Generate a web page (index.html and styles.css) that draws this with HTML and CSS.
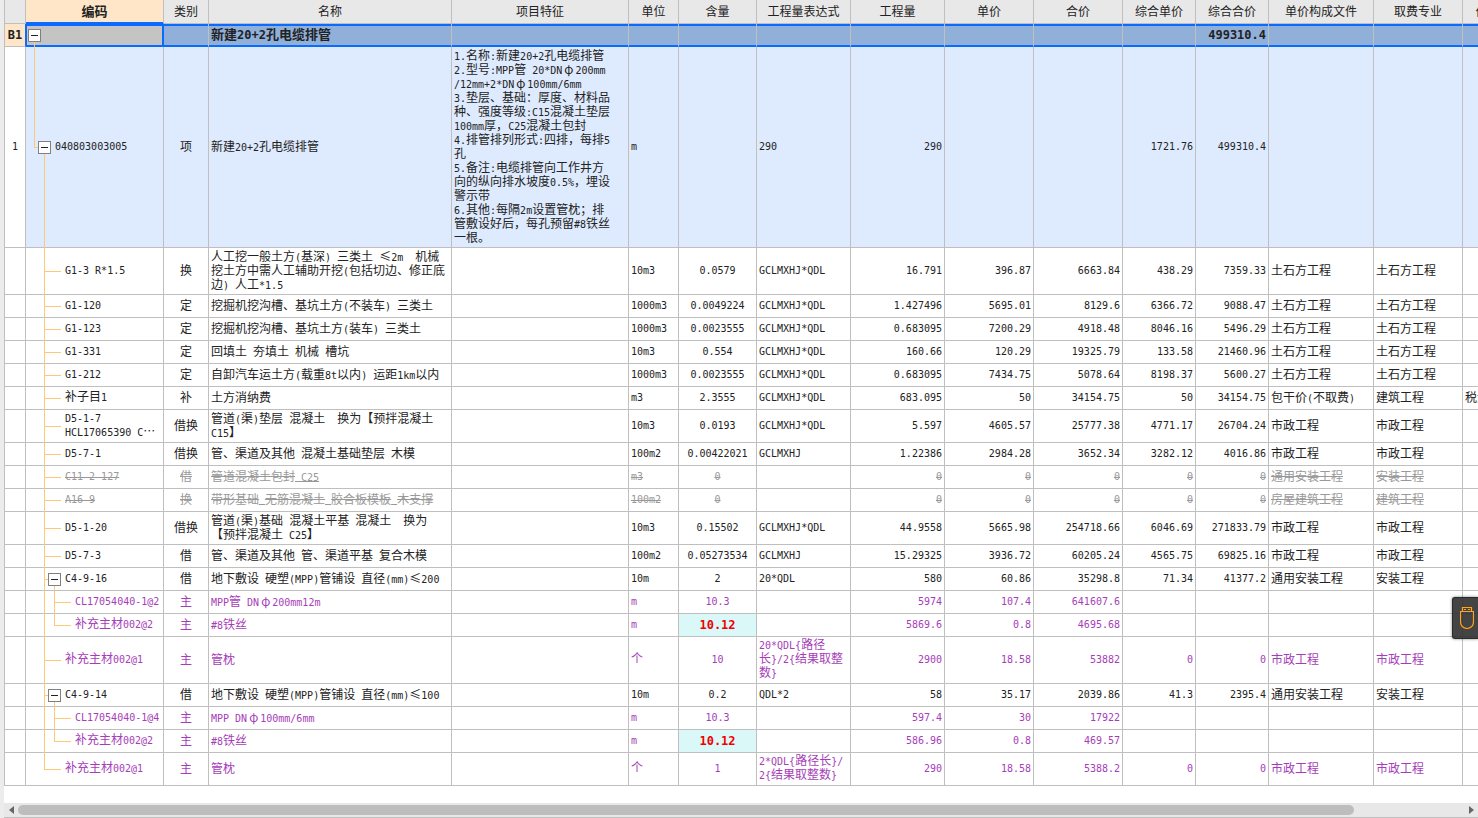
FILE: index.html
```html
<!DOCTYPE html>
<html lang="zh-CN">
<head>
<meta charset="utf-8">
<title>分部分项工程量清单</title>
<link rel="stylesheet" href="styles.css">
</head>
<body>
<main class="pane">
<div class="sheet">
<table class="grid">
<colgroup><col class="c-no"><col class="c-code"><col class="c-type"><col class="c-name"><col class="c-feat"><col class="c-unit"><col class="c-amt"><col class="c-expr"><col class="c-qty"><col class="c-price"><col class="c-price"><col class="c-comp"><col class="c-comp"><col class="c-file"><col class="c-major"><col class="c-last"></colgroup>
<thead>
<tr><th></th><th class="active">编码</th><th>类别</th><th>名称</th><th>项目特征</th><th>单位</th><th>含量</th><th>工程量表达式</th><th>工程量</th><th>单价</th><th>合价</th><th>综合单价</th><th>综合合价</th><th>单价构成文件</th><th>取费专业</th><th>价格</th></tr>
</thead>
<tbody>
<tr class="section"><td>B1</td><td class="tree root"><button class="toggle" type="button" aria-label="折叠"></button></td><td></td><td>新建<span class="w">20+2</span>孔电缆排管</td><td></td><td></td><td></td><td></td><td></td><td></td><td></td><td></td><td>499310.4</td><td></td><td></td><td></td></tr>
<tr class="item"><td>1</td><td class="tree list"><button class="toggle" type="button" aria-label="折叠"></button>040803003005</td><td>项</td><td>新建<span class="w">20+2</span>孔电缆排管</td><td><span class="w">1.</span>名称<span class="w">:</span>新建<span class="w">20+2</span>孔电缆排管<br><span class="w">2.</span>型号<span class="w">:MPP</span>管<span class="w"> 20*DN</span><span class="phi">φ</span><span class="w">200mm</span><br><span class="w">/12mm+2*DN</span><span class="phi">φ</span><span class="w">100mm/6mm</span><br><span class="w">3.</span>垫层、基础：厚度、材料品<br>种、强度等级<span class="w">:C15</span>混凝土垫层<br><span class="w">100mm</span>厚，<span class="w">C25</span>混凝土包封<br><span class="w">4.</span>排管排列形式<span class="w">:</span>四排，每排<span class="w">5</span><br>孔<br><span class="w">5.</span>备注<span class="w">:</span>电缆排管向工作井方<br>向的纵向排水坡度<span class="w">0.5%</span>，埋设<br>警示带<br><span class="w">6.</span>其他<span class="w">:</span>每隔<span class="w">2m</span>设置管枕；排<br>管敷设好后，每孔预留<span class="w">#8</span>铁丝<br>一根。</td><td>m</td><td></td><td>290</td><td>290</td><td></td><td></td><td>1721.76</td><td>499310.4</td><td></td><td></td><td></td></tr>
<tr><td></td><td class="tree leaf">G1-3 R*1.5</td><td>换</td><td>人工挖一般土方<span class="w">(</span>基深<span class="w">) </span>三类土<span class="w"> </span>≤<span class="w">2m  </span>机械<br>挖土方中需人工辅助开挖<span class="w">(</span>包括切边、修正底<br>边<span class="w">) </span>人工<span class="w">*1.5</span></td><td></td><td>10m3</td><td>0.0579</td><td>GCLMXHJ*QDL</td><td>16.791</td><td>396.87</td><td>6663.84</td><td>438.29</td><td>7359.33</td><td>土石方工程</td><td>土石方工程</td><td></td></tr>
<tr><td></td><td class="tree leaf">G1-120</td><td>定</td><td>挖掘机挖沟槽、基坑土方<span class="w">(</span>不装车<span class="w">) </span>三类土</td><td></td><td>1000m3</td><td>0.0049224</td><td>GCLMXHJ*QDL</td><td>1.427496</td><td>5695.01</td><td>8129.6</td><td>6366.72</td><td>9088.47</td><td>土石方工程</td><td>土石方工程</td><td></td></tr>
<tr><td></td><td class="tree leaf">G1-123</td><td>定</td><td>挖掘机挖沟槽、基坑土方<span class="w">(</span>装车<span class="w">) </span>三类土</td><td></td><td>1000m3</td><td>0.0023555</td><td>GCLMXHJ*QDL</td><td>0.683095</td><td>7200.29</td><td>4918.48</td><td>8046.16</td><td>5496.29</td><td>土石方工程</td><td>土石方工程</td><td></td></tr>
<tr><td></td><td class="tree leaf">G1-331</td><td>定</td><td>回填土<span class="w"> </span>夯填土<span class="w"> </span>机械<span class="w"> </span>槽坑</td><td></td><td>10m3</td><td>0.554</td><td>GCLMXHJ*QDL</td><td>160.66</td><td>120.29</td><td>19325.79</td><td>133.58</td><td>21460.96</td><td>土石方工程</td><td>土石方工程</td><td></td></tr>
<tr><td></td><td class="tree leaf">G1-212</td><td>定</td><td>自卸汽车运土方<span class="w">(</span>载重<span class="w">8t</span>以内<span class="w">) </span>运距<span class="w">1km</span>以内</td><td></td><td>1000m3</td><td>0.0023555</td><td>GCLMXHJ*QDL</td><td>0.683095</td><td>7434.75</td><td>5078.64</td><td>8198.37</td><td>5600.27</td><td>土石方工程</td><td>土石方工程</td><td></td></tr>
<tr><td></td><td class="tree leaf"><span class="cn">补子目</span>1</td><td>补</td><td>土方消纳费</td><td></td><td>m3</td><td>2.3555</td><td>GCLMXHJ*QDL</td><td>683.095</td><td>50</td><td>34154.75</td><td>50</td><td>34154.75</td><td>包干价<span class="w">(</span>不取费<span class="w">)</span></td><td>建筑工程</td><td>税金</td></tr>
<tr><td></td><td class="tree leaf">D5-1-7<br>HCL17065390 C<span class="cn">…</span></td><td>借换</td><td>管道<span class="w">(</span>渠<span class="w">)</span>垫层<span class="w"> </span>混凝土<span class="w">  </span>换为【预拌混凝土<br><span class="w">C15</span>】</td><td></td><td>10m3</td><td>0.0193</td><td>GCLMXHJ*QDL</td><td>5.597</td><td>4605.57</td><td>25777.38</td><td>4771.17</td><td>26704.24</td><td>市政工程</td><td>市政工程</td><td></td></tr>
<tr><td></td><td class="tree leaf">D5-7-1</td><td>借换</td><td>管、渠道及其他<span class="w"> </span>混凝土基础垫层<span class="w"> </span>木模</td><td></td><td>100m2</td><td>0.00422021</td><td>GCLMXHJ</td><td>1.22386</td><td>2984.28</td><td>3652.34</td><td>3282.12</td><td>4016.86</td><td>市政工程</td><td>市政工程</td><td></td></tr>
<tr class="void"><td></td><td class="tree leaf">C11-2-127</td><td>借</td><td>管道混凝土包封<span class="w"> C25</span></td><td></td><td>m3</td><td>0</td><td></td><td>0</td><td>0</td><td>0</td><td>0</td><td>0</td><td>通用安装工程</td><td>安装工程</td><td></td></tr>
<tr class="void"><td></td><td class="tree leaf">A16-9</td><td>换</td><td>带形基础<span class="w"> </span>无筋混凝土<span class="w"> </span>胶合板模板<span class="w"> </span>木支撑</td><td></td><td>100m2</td><td>0</td><td></td><td>0</td><td>0</td><td>0</td><td>0</td><td>0</td><td>房屋建筑工程</td><td>建筑工程</td><td></td></tr>
<tr><td></td><td class="tree leaf">D5-1-20</td><td>借换</td><td>管道<span class="w">(</span>渠<span class="w">)</span>基础<span class="w"> </span>混凝土平基<span class="w"> </span>混凝土<span class="w">  </span>换为<br>【预拌混凝土<span class="w"> C25</span>】</td><td></td><td>10m3</td><td>0.15502</td><td>GCLMXHJ*QDL</td><td>44.9558</td><td>5665.98</td><td>254718.66</td><td>6046.69</td><td>271833.79</td><td>市政工程</td><td>市政工程</td><td></td></tr>
<tr><td></td><td class="tree leaf">D5-7-3</td><td>借</td><td>管、渠道及其他<span class="w"> </span>管、渠道平基<span class="w"> </span>复合木模</td><td></td><td>100m2</td><td>0.05273534</td><td>GCLMXHJ</td><td>15.29325</td><td>3936.72</td><td>60205.24</td><td>4565.75</td><td>69825.16</td><td>市政工程</td><td>市政工程</td><td></td></tr>
<tr><td></td><td class="tree branch"><button class="toggle" type="button" aria-label="折叠"></button>C4-9-16</td><td>借</td><td>地下敷设<span class="w"> </span>硬塑<span class="w">(MPP)</span>管铺设<span class="w"> </span>直径<span class="w">(mm)</span>≤<span class="w">200</span></td><td></td><td>10m</td><td>2</td><td>20*QDL</td><td>580</td><td>60.86</td><td>35298.8</td><td>71.34</td><td>41377.2</td><td>通用安装工程</td><td>安装工程</td><td></td></tr>
<tr class="material"><td></td><td class="tree sub">CL17054040-1@2</td><td>主</td><td><span class="w">MPP</span>管<span class="w"> DN</span><span class="phi">φ</span><span class="w">200mm12m</span></td><td></td><td>m</td><td>10.3</td><td></td><td>5974</td><td>107.4</td><td>641607.6</td><td></td><td></td><td></td><td></td><td></td></tr>
<tr class="material"><td></td><td class="tree sub sub-end"><span class="cn">补充主材</span>002@2</td><td>主</td><td><span class="w">#8</span>铁丝</td><td></td><td>m</td><td class="changed">10.12</td><td></td><td>5869.6</td><td>0.8</td><td>4695.68</td><td></td><td></td><td></td><td></td><td></td></tr>
<tr class="material"><td></td><td class="tree leaf"><span class="cn">补充主材</span>002@1</td><td>主</td><td>管枕</td><td></td><td><span class="cn">个</span></td><td>10</td><td>20*QDL{<span class="cn">路径</span><br><span class="cn">长</span>}/2{<span class="cn">结果取整</span><br><span class="cn">数</span>}</td><td>2900</td><td>18.58</td><td>53882</td><td>0</td><td>0</td><td>市政工程</td><td>市政工程</td><td></td></tr>
<tr><td></td><td class="tree branch"><button class="toggle" type="button" aria-label="折叠"></button>C4-9-14</td><td>借</td><td>地下敷设<span class="w"> </span>硬塑<span class="w">(MPP)</span>管铺设<span class="w"> </span>直径<span class="w">(mm)</span>≤<span class="w">100</span></td><td></td><td>10m</td><td>0.2</td><td>QDL*2</td><td>58</td><td>35.17</td><td>2039.86</td><td>41.3</td><td>2395.4</td><td>通用安装工程</td><td>安装工程</td><td></td></tr>
<tr class="material"><td></td><td class="tree sub">CL17054040-1@4</td><td>主</td><td><span class="w">MPP DN</span><span class="phi">φ</span><span class="w">100mm/6mm</span></td><td></td><td>m</td><td>10.3</td><td></td><td>597.4</td><td>30</td><td>17922</td><td></td><td></td><td></td><td></td><td></td></tr>
<tr class="material"><td></td><td class="tree sub sub-end"><span class="cn">补充主材</span>002@2</td><td>主</td><td><span class="w">#8</span>铁丝</td><td></td><td>m</td><td class="changed">10.12</td><td></td><td>586.96</td><td>0.8</td><td>469.57</td><td></td><td></td><td></td><td></td><td></td></tr>
<tr class="material"><td></td><td class="tree leaf leaf-end"><span class="cn">补充主材</span>002@1</td><td>主</td><td>管枕</td><td></td><td><span class="cn">个</span></td><td>1</td><td>2*QDL{<span class="cn">路径长</span>}/<br>2{<span class="cn">结果取整数</span>}</td><td>290</td><td>18.58</td><td>5388.2</td><td>0</td><td>0</td><td>市政工程</td><td>市政工程</td><td></td></tr>
</tbody>
</table>
</div>
<div class="scrollbar">
<button class="arrow" type="button" aria-label="向左滚动"><svg width="5" height="8" viewBox="0 0 5 8"><path d="M5 0v8L0 4z"/></svg></button>
<div class="track"><div class="thumb"></div></div>
<button class="arrow" type="button" aria-label="向右滚动"><svg width="5" height="8" viewBox="0 0 5 8"><path d="M0 0v8l5-4z"/></svg></button>
</div>
</main>
<button class="dongle" type="button" aria-label="加密锁">
<svg width="14" height="22" viewBox="0 0 14 22" fill="none" stroke="#ffa41c" stroke-width="1.200"><path d="M2.500 4.500v-4h9v4M.5 4.500h13v10q0 6.500-6.500 7Q.5 21 .5 14.500zM4 2.500h2M8 2.500h2"/></svg>
</button>
</body>
</html>
```
FILE: styles.css
```css
* { box-sizing: border-box; }

body {
  margin: 0;
  height: 100vh;
  overflow: hidden;
  background: #ececec;
  color: #222;
  font-family: "DejaVu Sans Mono", "Noto Sans CJK SC", monospace;
  font-size: 10px;
  line-height: 14px;
}

button {
  margin: 0;
  padding: 0;
  border: 0;
  background: none;
}

.pane {
  display: flex;
  flex-direction: column;
  height: 100%;
  padding-left: 4px;
}

.sheet {
  flex: 1;
  overflow: hidden;
  background: #fff;
}

/* ---- grid ---- */

.grid {
  table-layout: fixed;
  width: 1498px;
  border-left: 1px solid #bfbfbf;
  border-spacing: 0;
}

.c-no { width: 21px; }
.c-code { width: 138px; }
.c-type { width: 45px; }
.c-name { width: 243px; }
.c-feat { width: 177px; }
.c-unit { width: 50px; }
.c-amt { width: 78px; }
.c-expr { width: 94px; }
.c-qty { width: 94px; }
.c-price { width: 89px; }
.c-comp { width: 73px; }
.c-file { width: 105px; }
.c-major { width: 89px; }
.c-last { width: 50px; }

th,
td {
  padding: 2px;
  border-right: 1px solid #bfbfbf;
  border-bottom: 1px solid #bfbfbf;
  white-space: pre;
  overflow: hidden;
}

th {
  height: 24px;
  padding: 1px 2px 3px;
  background: #e8e8e8;
  font: 12px/14px "Noto Sans CJK SC", sans-serif;
}

th.active {
  border-bottom-color: #0a6cff;
  background: #ffe6c8;
  box-shadow: inset 0 -1px #0a6cff;
  font-size: 13px;
  font-weight: bold;
}

td { height: 23px; }

td:nth-child(1),
td:nth-child(3),
td:nth-child(7) { text-align: center; }

td:nth-child(n+9):nth-child(-n+13) { text-align: right; }

td:nth-child(1) { padding: 0; }

td:nth-child(3),
td:nth-child(4),
td:nth-child(5),
td:nth-child(n+14) {
  padding: 1px 2px 3px;
  font-family: "Noto Sans CJK SC", sans-serif;
  font-size: 12px;
}

/* half-width runs inside Chinese text, and the reverse */
.w {
  font-family: "DejaVu Sans Mono", monospace;
  font-size: 10px;
  line-height: 0;
}

.cn {
  font-family: "Noto Sans CJK SC", sans-serif;
  font-size: 12px;
  line-height: 0;
}

/* full-width diameter sign */
.phi {
  padding: 0 2px;
  line-height: 0;
}

/* ---- row kinds ---- */

.section td {
  border-bottom-color: #0a6cff;
  background: #90b0da;
  box-shadow: inset 0 2px #0a6cff, inset 0 -1px #0a6cff;
  font-size: 12px;
  font-weight: bold;
}

.section td:nth-child(4) { font-size: 13px; }
.section .w { font-size: 12px; }

.section td:first-child {
  border-right-color: #0a6cff;
  border-bottom-color: #bfbfbf;
  background: #ffe6c8;
  box-shadow: none;
}

.section td.root {
  border-right-color: #0a6cff;
  background: #c4c4c4;
  box-shadow: inset 0 2px #0a6cff, inset 1px -1px #0a6cff, inset -1px 0 #0a6cff;
}

.item td { background: #deeafe; }
.item td:first-child { background: #fff; }

.void td {
  color: #999;
  text-decoration: line-through;
}

.material td { color: #a63db8; }

.material td.changed {
  background: #daf8f8;
  color: #f00000;
  font-size: 12px;
  font-weight: bold;
}

/* ---- outline in the code column ---- */

.tree {
  position: relative;
  overflow: visible;
}

.tree::before {
  content: "";
  position: absolute;
  inset: 0 0 -1px;
  background-repeat: no-repeat;
  --line: linear-gradient(#ffc878, #ffc878);
}

.root { padding: 2px; }
.list { padding-left: 12px; }
.leaf { padding-left: 39px; }
.branch { padding-left: 22px; }
.sub { padding-left: 49px; }

.root::before {
  background-image: var(--line);
  background-position: 8px 100%;
  background-size: 1px 6px;
}

.list::before {
  background-image: var(--line), var(--line), var(--line);
  background-position: 8px 0, 8px 50%, 18px 100%;
  background-size: 1px 50%, 4px 1px, 1px 50%;
}

.leaf::before {
  background-image: var(--line), var(--line);
  background-position: 18px 0, 18px 50%;
  background-size: 1px 100%, 17px 1px;
}

.leaf-end::before { background-size: 1px 50%, 17px 1px; }

.branch::before {
  background-image: var(--line), var(--line), var(--line);
  background-position: 18px 0, 18px 50%, 28px 100%;
  background-size: 1px 100%, 4px 1px, 1px 50%;
}

.sub::before {
  background-image: var(--line), var(--line), var(--line);
  background-position: 18px 0, 28px 0, 28px 50%;
  background-size: 1px 100%, 1px 100%, 17px 1px;
}

.sub-end::before { background-size: 1px 100%, 1px 50%, 17px 1px; }

.toggle {
  position: relative;
  width: 13px;
  height: 13px;
  margin-right: 4px;
  border: 1px solid #808080;
  background: linear-gradient(#222, #222) center / 7px 1px no-repeat #fff;
  vertical-align: middle;
}

/* ---- horizontal scrollbar ---- */

.scrollbar {
  display: flex;
  align-items: center;
  height: 15px;
  border-bottom: 1px solid #bfbfbf;
  background: #e8e8e8;
}

.arrow {
  display: flex;
  align-items: center;
  justify-content: center;
  width: 14px;
  height: 14px;
  fill: #666;
}

.track { flex: 1; }

.thumb {
  width: 92.400%;
  height: 10px;
  border-radius: 5px;
  background: #bdbdbd;
}

/* ---- dongle tab docked at the window edge ---- */

.dongle {
  position: absolute;
  top: 597px;
  right: 0;
  display: flex;
  align-items: center;
  width: 26px;
  height: 42px;
  padding-left: 7px;
  border: 1px solid #2b2b2b;
  border-right: 0;
  border-radius: 3px 0 0 3px;
  background: rgba(48, 48, 48, .9);
  box-shadow: 0 0 3px rgba(0, 0, 0, .5);
}
```
